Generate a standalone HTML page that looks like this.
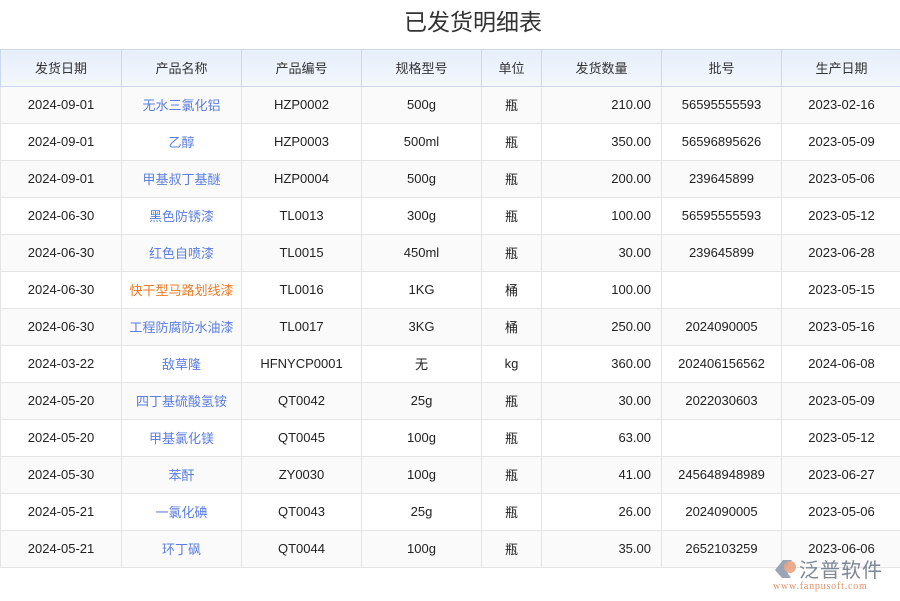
<!DOCTYPE html>
<html><head><meta charset="utf-8"><style>
html,body{margin:0;padding:0;width:900px;height:600px;background:#fff;overflow:hidden;font-family:"Liberation Sans","Noto Sans CJK SC",sans-serif;}
.title{position:absolute;left:0;width:946px;top:3px;text-align:center;font-size:23px;color:#333;}
table{position:absolute;left:0;top:49px;border-collapse:collapse;table-layout:fixed;width:901px;}
td,th{border:1px solid #e4e4e4;height:34px;padding:0 0 2px 0;text-align:center;font-size:13px;color:#222;font-weight:normal;}
th{background:linear-gradient(#e6eefa,#f4f8fe);border-color:#c9d8ea;color:#333;}
tr:nth-child(even) td{background:#fafafa;}
td.n{color:#5b7ee0;}
td.o{color:#f07a24;}
td.q{text-align:right;padding-right:10px;}
.logo{position:absolute;left:773px;top:556px;}
</style></head><body>
<div class="title">已发货明细表</div>
<table>
<colgroup><col style="width:121px"><col style="width:120px"><col style="width:120px"><col style="width:120px"><col style="width:60px"><col style="width:120px"><col style="width:120px"><col style="width:120px"></colgroup>
<tr><th>发货日期</th><th>产品名称</th><th>产品编号</th><th>规格型号</th><th>单位</th><th>发货数量</th><th>批号</th><th>生产日期</th></tr>
<tr><td>2024-09-01</td><td class="n">无水三氯化铝</td><td>HZP0002</td><td>500g</td><td>瓶</td><td class="q">210.00</td><td>56595555593</td><td>2023-02-16</td></tr>
<tr><td>2024-09-01</td><td class="n">乙醇</td><td>HZP0003</td><td>500ml</td><td>瓶</td><td class="q">350.00</td><td>56596895626</td><td>2023-05-09</td></tr>
<tr><td>2024-09-01</td><td class="n">甲基叔丁基醚</td><td>HZP0004</td><td>500g</td><td>瓶</td><td class="q">200.00</td><td>239645899</td><td>2023-05-06</td></tr>
<tr><td>2024-06-30</td><td class="n">黑色防锈漆</td><td>TL0013</td><td>300g</td><td>瓶</td><td class="q">100.00</td><td>56595555593</td><td>2023-05-12</td></tr>
<tr><td>2024-06-30</td><td class="n">红色自喷漆</td><td>TL0015</td><td>450ml</td><td>瓶</td><td class="q">30.00</td><td>239645899</td><td>2023-06-28</td></tr>
<tr><td>2024-06-30</td><td class="o">快干型马路划线漆</td><td>TL0016</td><td>1KG</td><td>桶</td><td class="q">100.00</td><td></td><td>2023-05-15</td></tr>
<tr><td>2024-06-30</td><td class="n">工程防腐防水油漆</td><td>TL0017</td><td>3KG</td><td>桶</td><td class="q">250.00</td><td>2024090005</td><td>2023-05-16</td></tr>
<tr><td>2024-03-22</td><td class="n">敌草隆</td><td>HFNYCP0001</td><td>无</td><td>kg</td><td class="q">360.00</td><td>202406156562</td><td>2024-06-08</td></tr>
<tr><td>2024-05-20</td><td class="n">四丁基硫酸氢铵</td><td>QT0042</td><td>25g</td><td>瓶</td><td class="q">30.00</td><td>2022030603</td><td>2023-05-09</td></tr>
<tr><td>2024-05-20</td><td class="n">甲基氯化镁</td><td>QT0045</td><td>100g</td><td>瓶</td><td class="q">63.00</td><td></td><td>2023-05-12</td></tr>
<tr><td>2024-05-30</td><td class="n">苯酐</td><td>ZY0030</td><td>100g</td><td>瓶</td><td class="q">41.00</td><td>245648948989</td><td>2023-06-27</td></tr>
<tr><td>2024-05-21</td><td class="n">一氯化碘</td><td>QT0043</td><td>25g</td><td>瓶</td><td class="q">26.00</td><td>2024090005</td><td>2023-05-06</td></tr>
<tr><td>2024-05-21</td><td class="n">环丁砜</td><td>QT0044</td><td>100g</td><td>瓶</td><td class="q">35.00</td><td>2652103259</td><td>2023-06-06</td></tr>
</table>
<div class="logo">
<svg width="130" height="45" style="position:absolute;left:0;top:0">
<path d="M2 14 L10 4 L19 4 L12 13 L18 22 L9 22 Z" fill="#8a95a8" opacity="0.85"/>
<circle cx="17" cy="11" r="6" fill="#e8a380" opacity="0.9"/>
</svg>
<div style="position:absolute;left:26px;top:-2px;font-size:20px;color:#7d8796;letter-spacing:1px;white-space:nowrap;font-family:'Noto Sans CJK SC',sans-serif;">泛普软件</div>
<div style="position:absolute;left:0px;top:25px;font-size:10px;color:#e0926c;font-family:'Liberation Serif',serif;white-space:nowrap;letter-spacing:0.8px;">www.fanpusoft.com</div>
</div>
</body></html>
